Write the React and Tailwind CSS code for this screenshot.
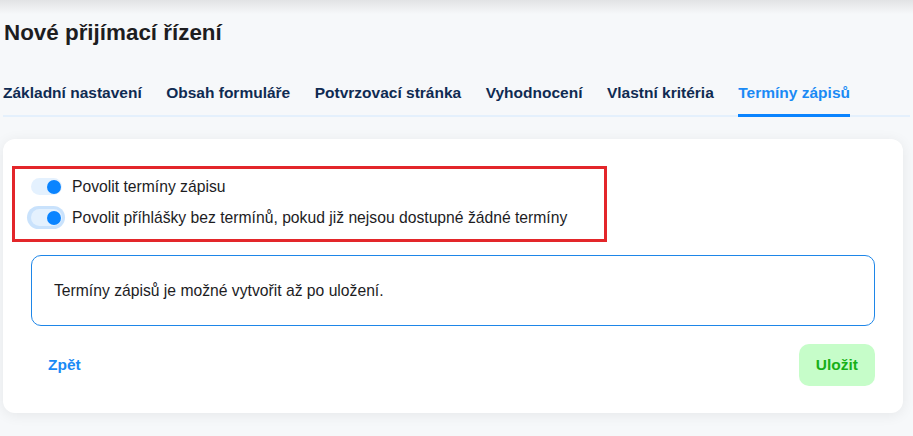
import React from "react";

const tabs = [
  "Základní nastavení",
  "Obsah formuláře",
  "Potvrzovací stránka",
  "Vyhodnocení",
  "Vlastní kritéria",
  "Termíny zápisů",
];

function Toggle({ focused }) {
  return (
    <span
      className={
        "inline-flex h-[23px] w-[38px] items-center justify-center rounded-full " +
        (focused ? "bg-[#c9e2fc]" : "")
      }
    >
      <span className="flex h-[17px] w-[31px] items-center justify-end rounded-full bg-[#e4f1fe] pr-[1px]">
        <span className="h-[14px] w-[14px] rounded-full bg-[#0a84ff]" />
      </span>
    </span>
  );
}

export default function App() {
  const active = "Termíny zápisů";

  return (
    <div className="relative min-h-screen bg-[#f6f8fa] font-['Liberation_Sans',Arial,sans-serif]">
      {/* header shadow */}
      <div className="pointer-events-none absolute inset-x-0 top-0 h-[14px] bg-gradient-to-b from-[#e2e3e5] to-transparent" />

      <div className="px-[3px] pt-[17px]">
        <h1 className="pl-px text-[22.4px] font-bold leading-[32px] text-[#1d1d1f]">
          Nové přijímací řízení
        </h1>

        <nav className="mt-[34px] flex gap-[24.5px] border-b-2 border-[#e4f0fc]">
          {tabs.map((tab) => (
            <div
              key={tab}
              className={
                "-mb-[2px] border-b-[3px] pb-[11px] text-[15.5px] font-bold leading-[20px] " +
                (tab === active
                  ? "border-[#0a84ff] text-[#1a8af5]"
                  : "border-transparent text-[#0f2b52]")
              }
            >
              {tab}
            </div>
          ))}
        </nav>

        <div className="mt-[22px] mr-[7px] rounded-xl bg-white px-[9px] pt-[27px] pb-[27px] shadow-[0_2px_14px_rgba(0,0,0,0.07)]">
          <div className="w-[595px] border-[3px] border-[#e3262a] pt-[2px] pb-[6px] pl-[12px]">
            <label className="flex h-[31px] items-center gap-[7px]">
              <Toggle />
              <span className="text-[15.7px] text-[#1d1d1f]">Povolit termíny zápisu</span>
            </label>
            <label className="flex h-[31px] items-center gap-[7px]">
              <Toggle focused />
              <span className="text-[15.7px] text-[#1d1d1f]">
                Povolit příhlášky bez termínů, pokud již nejsou dostupné žádné termíny
              </span>
            </label>
          </div>

          <div className="px-[19px]">
            <div className="mt-[13px] flex h-[71px] items-center rounded-[10px] border border-[#1e86e8] px-[22px]">
              <p className="text-[15.7px] text-[#1d1d1f]">
                Termíny zápisů je možné vytvořit až po uložení.
              </p>
            </div>

            <div className="mt-[18px] flex items-center justify-between">
              <button className="h-[42px] px-[17px] text-[15.5px] font-bold text-[#1a8af5]">
                Zpět
              </button>
              <button className="h-[42px] rounded-[10px] bg-[#c6fdc9] px-[17px] text-[15.5px] font-bold text-[#17b017]">
                Uložit
              </button>
            </div>
          </div>
        </div>
      </div>
    </div>
  );
}
